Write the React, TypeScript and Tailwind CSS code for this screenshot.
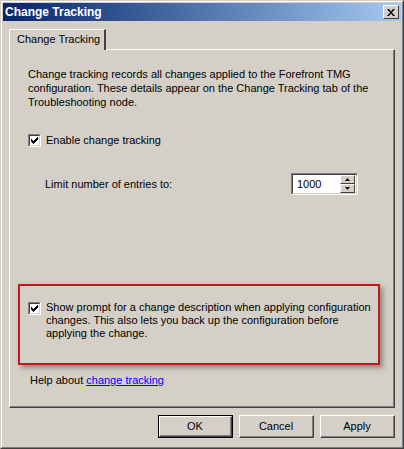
import React from "react";

const FONT = { fontFamily: '"Liberation Sans", Arial, sans-serif' };

// classic 7x7 check glyph, one 3px-tall column per x
const CHECK_COLS = [2, 3, 4, 3, 2, 1, 0];

function Check() {
  return (
    <div className="relative w-[13px] h-[13px] shrink-0 bg-white border-t border-l border-t-[#808080] border-l-[#808080] border-b border-r border-b-white border-r-white">
      <div className="absolute inset-0 border-t border-l border-t-[#404040] border-l-[#404040] border-b border-r border-b-[#d4d0c8] border-r-[#d4d0c8]">
        <svg viewBox="0 0 7 7" className="absolute left-[1px] top-[1px] w-[7px] h-[7px]" shapeRendering="crispEdges">
          {CHECK_COLS.map((y, x) => (
            <rect key={x} x={x} y={y} width={1} height={3} fill="#000" />
          ))}
        </svg>
      </div>
    </div>
  );
}

function Button({ label, primary }: { label: string; primary?: boolean }) {
  return (
    <div className={`w-[75px] h-[23px] ${primary ? "border border-black" : ""}`}>
      <div className="w-full h-full border-t border-l border-t-white border-l-white border-b border-r border-b-[#404040] border-r-[#404040]">
        <div className="w-full h-full border-b border-r border-b-[#808080] border-r-[#808080] flex items-center justify-center text-[11px] text-black">
          {label}
        </div>
      </div>
    </div>
  );
}

function SpinArrow({ up }: { up?: boolean }) {
  return (
    <div className="w-[15px] h-[9px] bg-[#d4d0c8] border-t border-l border-t-white border-l-white border-b border-r border-b-[#404040] border-r-[#404040] flex items-center justify-center">
      <svg viewBox="0 0 5 3" className="w-[5px] h-[3px]">
        {up ? <path d="M2.5 0 L5 3 L0 3 Z" fill="#000" /> : <path d="M0 0 L5 0 L2.5 3 Z" fill="#000" />}
      </svg>
    </div>
  );
}

export default function App() {
  return (
    <div className="w-[404px] h-[449px] bg-[#d4d0c8] text-[11px] text-black" style={FONT}>
      <div className="w-full h-full border-t border-l border-t-[#d4d0c8] border-l-[#d4d0c8] border-b border-r border-b-[#404040] border-r-[#404040]">
        <div className="w-full h-full border-t border-l border-t-white border-l-white border-b border-r border-b-[#808080] border-r-[#808080] p-px flex flex-col">
          {/* title bar */}
          <div className="h-[18px] flex items-center justify-between pl-[2px] pr-[2px] bg-gradient-to-r from-[#0a246a] to-[#a6caf0]">
            <span className="text-white font-bold text-[12px] leading-none">Change Tracking</span>
            <div className="w-[16px] h-[14px] bg-[#d4d0c8] border-t border-l border-t-white border-l-white border-b border-r border-b-[#404040] border-r-[#404040] flex items-center justify-center">
              <svg viewBox="0 0 8 7" className="w-[8px] h-[7px]">
                <path d="M0 0 L2 0 L4 2.5 L6 0 L8 0 L5 3.5 L8 7 L6 7 L4 4.5 L2 7 L0 7 L3 3.5 Z" fill="#000" />
              </svg>
            </div>
          </div>

          {/* body */}
          <div className="flex-1 flex flex-col px-[6px] pt-[8px]">
            {/* tab strip */}
            <div className="flex h-[20px]">
              <div className="relative z-10 w-[97px] h-[21px] bg-[#d4d0c8] border-t border-l border-t-white border-l-white rounded-tl-[2px] border-r-2 border-r-[#404040] flex items-center pl-[7px]">
                <span className="-mt-[1px]">Change Tracking</span>
              </div>
            </div>

            {/* tab panel */}
            <div className="h-[359px] border-t border-l border-t-white border-l-white border-b border-r border-b-[#404040] border-r-[#404040]">
              <div className="w-full h-full border-b border-r border-b-[#808080] border-r-[#808080] flex flex-col pl-[8px] pr-[12px]">
                <p className="mt-[17px] pl-[10px] leading-[14px] pr-[4px]">
                  Change tracking records all changes applied to the Forefront TMG configuration. These details appear on the Change Tracking tab of the Troubleshooting node.
                </p>

                <div className="mt-[24px] pl-[10px] flex items-center gap-[5px] h-[14px]">
                  <Check />
                  <span>Enable change tracking</span>
                </div>

                <div className="mt-[26px] pl-[27px] flex items-center justify-between h-[22px] pr-[23px]">
                  <span>Limit number of entries to:</span>
                  <div className="w-[67px] h-[22px] bg-white border-t border-l border-t-[#808080] border-l-[#808080] border-b border-r border-b-white border-r-white">
                    <div className="w-full h-full border-t border-l border-t-[#404040] border-l-[#404040] border-b border-r border-b-[#d4d0c8] border-r-[#d4d0c8] flex items-center justify-between pl-[4px] pr-px">
                      <span>1000</span>
                      <div className="flex flex-col">
                        <SpinArrow up />
                        <SpinArrow />
                      </div>
                    </div>
                  </div>
                </div>

                <div className="mt-[89px] w-[362px] h-[81px] border-2 border-[#c8161d] shadow-[3px_3px_5px_rgba(80,80,70,0.55)] pl-[8px] pt-[15px] flex gap-[5px]">
                  <div className="pt-[1px]">
                    <Check />
                  </div>
                  <p className="leading-[13px] w-[330px]">
                    Show prompt for a change description when applying configuration changes. This also lets you back up the configuration before applying the change.
                  </p>
                </div>

                <div className="mt-[8px] pl-[12px] leading-[14px]">
                  Help about <span className="text-[#0000ff] underline">change tracking</span>
                </div>
              </div>
            </div>

            {/* buttons */}
            <div className="mt-[7px] flex justify-end gap-[6px]">
              <Button label="OK" primary />
              <Button label="Cancel" />
              <Button label="Apply" />
            </div>
          </div>
        </div>
      </div>
    </div>
  );
}
